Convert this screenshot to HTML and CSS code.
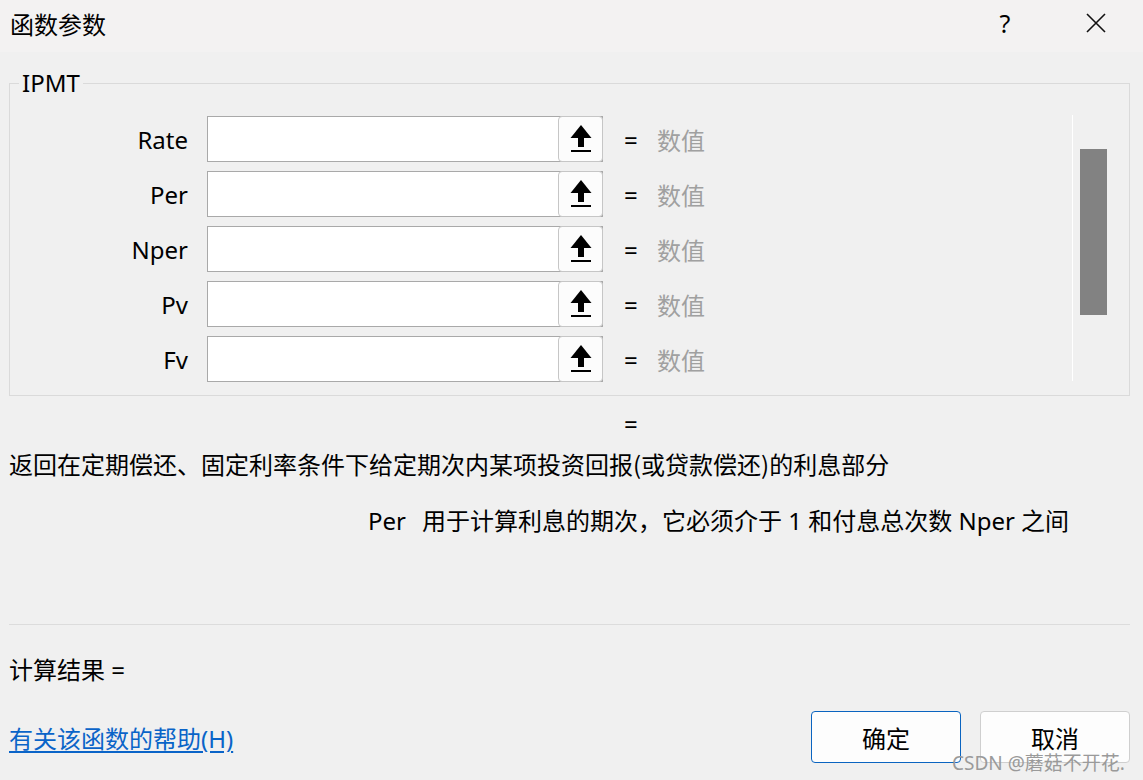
FILE: index.html
```html
<!DOCTYPE html>
<html lang="zh-CN">
<head>
<meta charset="utf-8">
<title>函数参数</title>
<link rel="stylesheet" href="styles.css">
</head>
<body>
<div class="window">
  <header class="titlebar">
    <span class="title">函数参数</span>
    <span class="help">?</span>
    <span class="close">
      <svg width="20" height="20" viewBox="0 0 20 20"><path d="M1 1 L19 19 M19 1 L1 19" stroke="#111" stroke-width="1.6" fill="none"/></svg>
    </span>
  </header>
  <main class="content">
    <fieldset class="group">
      <legend class="legend">IPMT</legend>
      <div class="group-body">
        <div class="rows">
          <div class="row">
            <label class="lbl">Rate</label>
            <div class="field"><div class="field-text"></div><div class="pick"><svg width="22" height="30" viewBox="0 0 22 30"><polygon points="11,1 0.5,14 21.5,14" fill="#000"/><rect x="8" y="13" width="6" height="10" fill="#000"/><rect x="1" y="26" width="20" height="2" fill="#000"/></svg></div></div>
            <span class="eq">=</span>
            <span class="val">数值</span>
          </div>
          <div class="row">
            <label class="lbl">Per</label>
            <div class="field"><div class="field-text"></div><div class="pick"><svg width="22" height="30" viewBox="0 0 22 30"><polygon points="11,1 0.5,14 21.5,14" fill="#000"/><rect x="8" y="13" width="6" height="10" fill="#000"/><rect x="1" y="26" width="20" height="2" fill="#000"/></svg></div></div>
            <span class="eq">=</span>
            <span class="val">数值</span>
          </div>
          <div class="row">
            <label class="lbl">Nper</label>
            <div class="field"><div class="field-text"></div><div class="pick"><svg width="22" height="30" viewBox="0 0 22 30"><polygon points="11,1 0.5,14 21.5,14" fill="#000"/><rect x="8" y="13" width="6" height="10" fill="#000"/><rect x="1" y="26" width="20" height="2" fill="#000"/></svg></div></div>
            <span class="eq">=</span>
            <span class="val">数值</span>
          </div>
          <div class="row">
            <label class="lbl">Pv</label>
            <div class="field"><div class="field-text"></div><div class="pick"><svg width="22" height="30" viewBox="0 0 22 30"><polygon points="11,1 0.5,14 21.5,14" fill="#000"/><rect x="8" y="13" width="6" height="10" fill="#000"/><rect x="1" y="26" width="20" height="2" fill="#000"/></svg></div></div>
            <span class="eq">=</span>
            <span class="val">数值</span>
          </div>
          <div class="row">
            <label class="lbl">Fv</label>
            <div class="field"><div class="field-text"></div><div class="pick"><svg width="22" height="30" viewBox="0 0 22 30"><polygon points="11,1 0.5,14 21.5,14" fill="#000"/><rect x="8" y="13" width="6" height="10" fill="#000"/><rect x="1" y="26" width="20" height="2" fill="#000"/></svg></div></div>
            <span class="eq">=</span>
            <span class="val">数值</span>
          </div>
        </div>
        <div class="scroll"><div class="thumb"></div></div>
      </div>
    </fieldset>
    <div class="result-eq">=</div>
    <p class="desc">返回在定期偿还、固定利率条件下给定期次内某项投资回报(或贷款偿还)的利息部分</p>
    <p class="arg"><span class="arg-name">Per</span>用于计算利息的期次，它必须介于 1 和付息总次数 Nper 之间</p>
    <div class="sep"></div>
    <div class="calc">计算结果 =</div>
    <div class="footer">
      <a class="help-link" href="#">有关该函数的帮助(H)</a>
      <div class="buttons">
        <button class="btn primary">确定</button>
        <button class="btn">取消</button>
      </div>
    </div>
  </main>
  <div class="watermark">CSDN @蘑菇不开花.</div>
</div>
</body>
</html>
```
FILE: styles.css
```css
* { box-sizing: border-box; }
html, body {
  margin: 0;
  padding: 0;
  background: #f0f0f0;
}
body {
  font-family: "Noto Sans", "Noto Sans CJK SC", sans-serif;
  font-size: 24px;
  color: #000;
}
.window {
  position: relative;
  width: 1143px;
  height: 780px;
  background: #f0f0f0;
  overflow: hidden;
}
.titlebar {
  height: 52px;
  background: #f3f2f2;
  display: flex;
  align-items: center;
  padding: 0 0 6px 10px;
}
.title {
  font-family: "Noto Sans CJK SC", sans-serif;
  font-size: 24px;
  flex: 1;
}
.help {
  font-size: 25px;
  width: 20px;
  text-align: center;
  margin-right: 71px;
}
.close {
  display: flex;
  margin-right: 37px;
}
.content {
  padding: 0 13px 0 9px;
}
.group {
  margin: 16px 0 0 0;
  padding: 17px 22px 14px 0;
  border: 1px solid #dadada;
  min-width: 0;
}
.legend {
  margin-left: 9px;
  padding: 0 3px;
  line-height: 30px;
  font-size: 24px;
}
.group-body {
  display: flex;
  height: 266px;
}
.rows {
  flex: 1;
  display: flex;
  flex-direction: column;
  gap: 9px;
  padding-top: 1px;
}
.row {
  display: flex;
  align-items: center;
  height: 46px;
}
.lbl {
  width: 178px;
  text-align: right;
}
.field {
  margin-left: 19px;
  width: 396px;
  height: 46px;
  border: 1px solid #a9a9a9;
  background: #fff;
  display: flex;
}
.field-text { flex: 1; }
.pick {
  width: 45px;
  margin: -1px -1px -1px 0;
  border: 1px solid #c6c6c6;
  border-radius: 4px;
  background: #fcfcfc;
  display: flex;
  align-items: center;
  justify-content: center;
}
.eq {
  margin-left: 21px;
  width: 12px;
  text-align: center;
}
.val {
  margin-left: 21px;
  color: #a0a0a0;
  font-family: "Noto Sans CJK SC", sans-serif;
}
.scroll {
  width: 35px;
  border-left: 1px solid #ffffff;
  padding-left: 7px;
  padding-top: 34px;
}
.thumb {
  width: 27px;
  height: 166px;
  background: #828282;
}
.result-eq {
  margin: 13px 0 0 615px;
  line-height: 30px;
  height: 30px;
}
.desc {
  margin: 10px 0 0 0;
  line-height: 30px;
  font-family: "Noto Sans CJK SC", sans-serif;
}
.arg {
  margin: 27px 0 0 359px;
  line-height: 30px;
  font-family: "Noto Sans", "Noto Sans CJK SC", sans-serif;
}
.arg-name {
  margin-right: 16px;
}
.sep {
  margin-top: 88px;
  height: 1px;
  background: #dcdcdc;
}
.calc {
  margin-top: 30px;
  line-height: 30px;
}
.footer {
  margin-top: 26px;
  display: flex;
  align-items: center;
  justify-content: space-between;
}
.help-link {
  color: #0a64c8;
  text-decoration: underline;
  text-underline-offset: 3px;
  margin-top: 4px;
  line-height: 30px;
}
.buttons {
  display: flex;
  gap: 19px;
}
.btn {
  width: 150px;
  height: 52px;
  border: 1px solid #cfcfcf;
  border-radius: 4px;
  background: #fdfdfd;
  font-family: "Noto Sans CJK SC", sans-serif;
  font-size: 24px;
  color: #000;
  padding: 0;
}
.btn.primary {
  border-color: #0a64c0;
}
.watermark {
  position: absolute;
  left: 952px;
  top: 748px;
  font-family: "Noto Sans", "Noto Sans CJK SC", sans-serif;
  font-size: 19px;
  color: #9a9a9a;
}
```
